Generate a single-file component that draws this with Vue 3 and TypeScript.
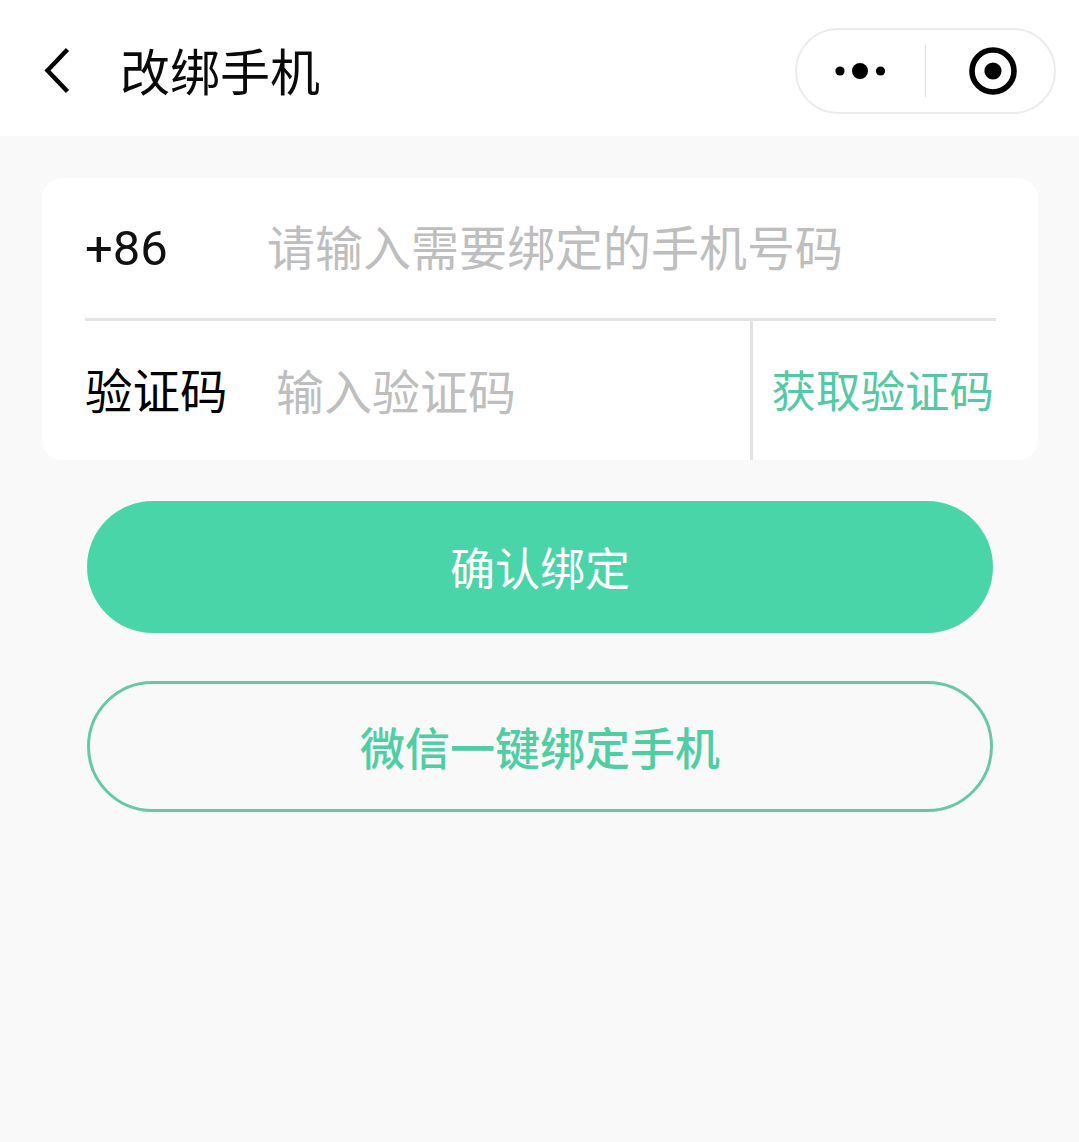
<script setup lang="ts">
const title: string = '改绑手机'
</script>

<template>
  <div class="page">
    <header class="nav">
      <svg class="back" width="30" height="50" viewBox="0 0 30 50" aria-hidden="true">
        <path d="M25.5 2.5 L5.5 23.5 L25.5 44.5" fill="none" stroke="#000" stroke-width="4.4" />
      </svg>
      <h1 class="title">{{ title }}</h1>
      <div class="capsule">
        <div class="cap-cell">
          <svg width="52" height="18" viewBox="0 0 52 18" aria-hidden="true">
            <circle cx="5" cy="9" r="4.6" fill="#000" />
            <circle cx="25" cy="9" r="8" fill="#000" />
            <circle cx="45.5" cy="9" r="4.6" fill="#000" />
          </svg>
        </div>
        <div class="cap-line"></div>
        <div class="cap-cell target">
          <svg width="50" height="50" viewBox="0 0 50 50" aria-hidden="true">
            <circle cx="25" cy="25" r="21" fill="none" stroke="#000" stroke-width="5.6" />
            <circle cx="25" cy="25" r="8.6" fill="#000" />
          </svg>
        </div>
      </div>
    </header>

    <main class="content">
      <section class="card">
        <div class="row phone">
          <span class="code">+86</span>
          <span class="ph">请输入需要绑定的手机号码</span>
        </div>
        <div class="row verify">
          <span class="label">验证码</span>
          <span class="ph small">输入验证码</span>
          <span class="get">获取验证码</span>
        </div>
      </section>

      <div class="actions">
        <button class="btn primary" type="button">确认绑定</button>
        <button class="btn outline" type="button">微信一键绑定手机</button>
      </div>
    </main>
  </div>
</template>

<style>
html, body { margin: 0; background: #f9f9f9; }
</style>

<style scoped>
.page {
  width: 1079px;
  height: 1142px;
  overflow: hidden;
  background: #f9f9f9;
  font-family: "Noto Sans CJK SC", "Noto Sans", sans-serif;
  color: #000;
}
.nav {
  height: 136px;
  box-sizing: border-box;
  background: #fff;
  display: flex;
  align-items: center;
  padding: 0 23px 0 42px;
}
.back { margin-top: 8px; flex: none; }
.title {
  margin: 2px 0 0 48px;
  font-size: 50px;
  line-height: 60px;
  font-weight: 400;
  color: #0a0a0a;
}
.capsule {
  margin-left: auto;
  margin-top: 5px;
  width: 261px;
  height: 86px;
  box-sizing: border-box;
  border: 2px solid #ececec;
  border-radius: 43px;
  background: #fff;
  display: flex;
  align-items: center;
}
.cap-cell {
  flex: none;
  width: 128px;
  display: flex;
  align-items: center;
  justify-content: center;
}
.cap-cell.target { width: 130px; padding-left: 4px; box-sizing: border-box; }
.cap-line { flex: none; width: 1px; height: 52px; background: #e2e2e2; }
.content { padding: 42px 41px 0 42px; }
.card {
  height: 282px;
  border-radius: 20px;
  background: #fff;
  padding: 0 42px 0 43px;
  display: flex;
  flex-direction: column;
}
.row { display: flex; align-items: center; }
.phone {
  height: 143px;
  box-sizing: border-box;
  border-bottom: 3px solid #e4e4e4;
}
.code {
  width: 182px;
  font-family: Roboto, "Noto Sans", sans-serif;
  font-size: 49px;
  font-weight: 400;
  color: #111;
  margin-top: 0;
}
.ph { font-size: 48px; color: #bebebe; white-space: nowrap; margin-top: -6px; }
.verify { height: 139px; }
.label { width: 191px; font-size: 47.5px; margin-top: -4px; }
.small { width: 474px; font-size: 48px; margin-top: -4px; }
.get {
  height: 100%;
  flex: 1;
  display: flex;
  align-items: center;
  justify-content: flex-end;
  border-left: 3px solid #e2e2e2;
  font-size: 44.5px;
  color: #53c9a4;
  white-space: nowrap;
  margin-right: 2px;
  padding-bottom: 5px;
  box-sizing: border-box;
}
.actions {
  padding: 41px 3px 0 45px;
  display: flex;
  flex-direction: column;
  gap: 48px;
}
.btn {
  width: 906px;
  border-radius: 70px;
  font-family: inherit;
  font-size: 45px;
  padding: 0;
}
.primary {
  height: 132px;
  border: 0;
  background: #49d5a7;
  color: #fff;
  padding-bottom: 2px;
}
.outline {
  height: 131px;
  border: 3px solid #68c8a6;
  background: #f9f9f9;
  color: #4fcda3;
  font-weight: 500;
  padding-bottom: 0;
}
</style>
